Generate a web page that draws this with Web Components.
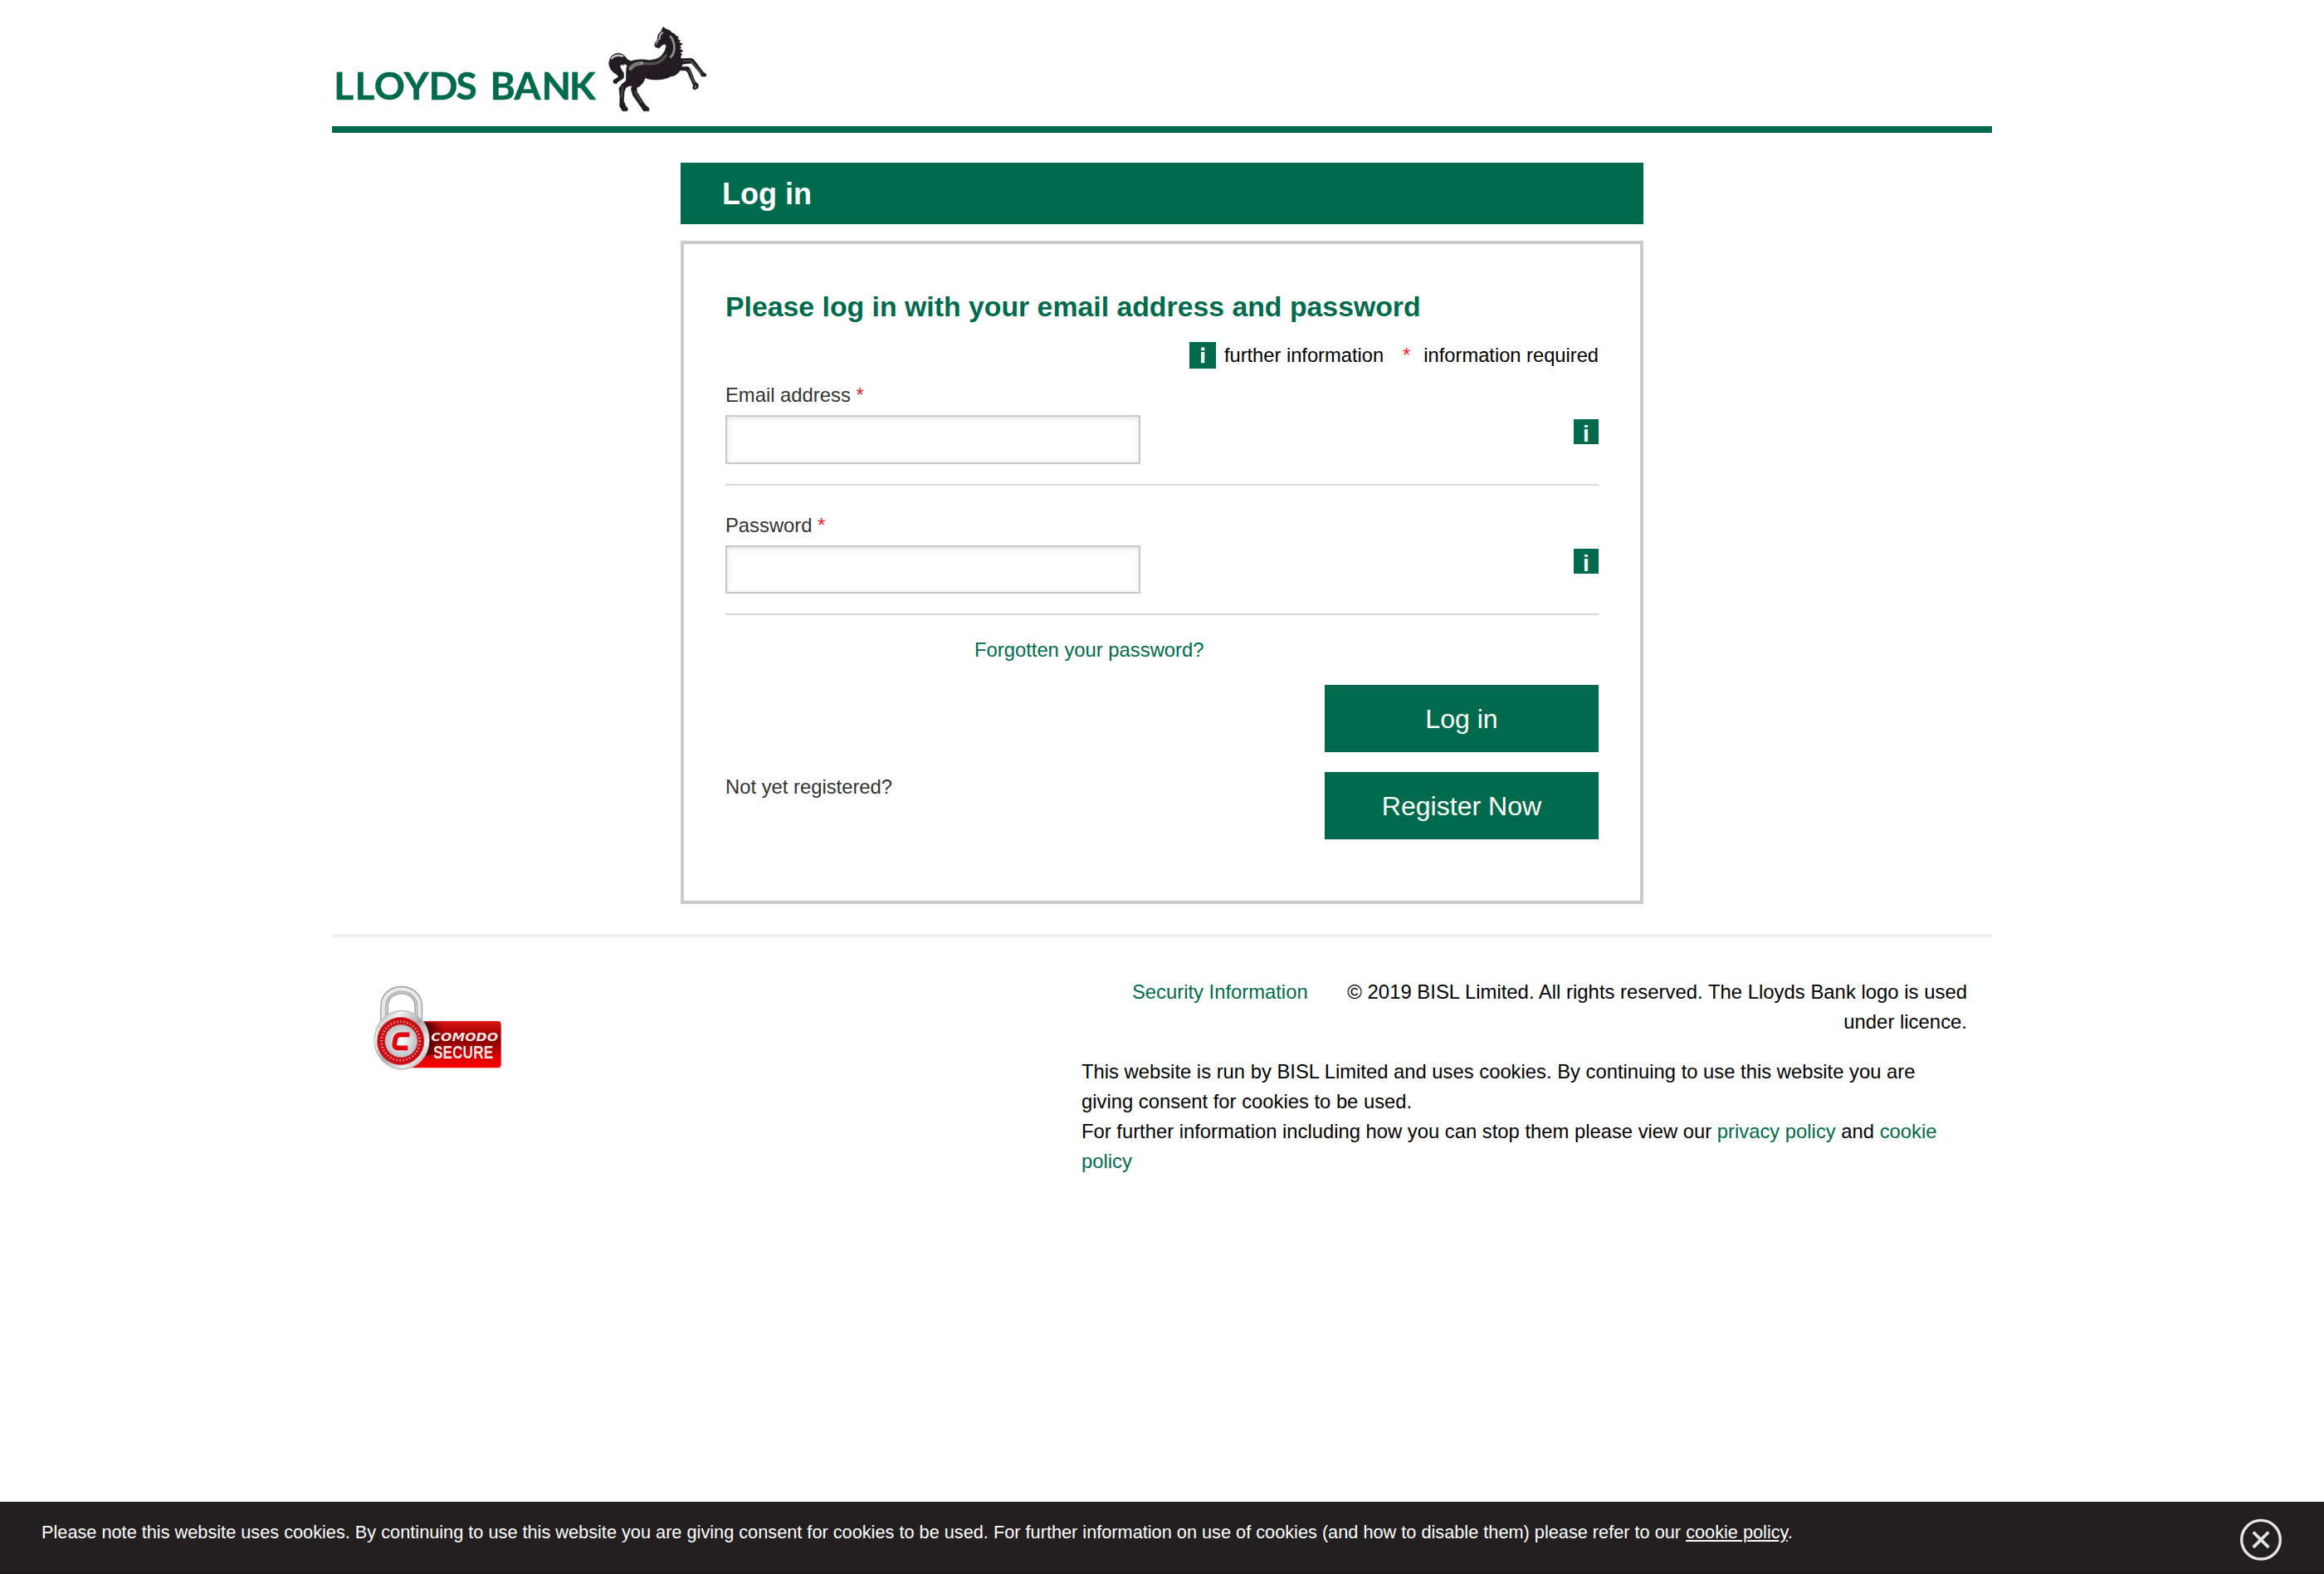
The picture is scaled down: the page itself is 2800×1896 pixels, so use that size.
<!DOCTYPE html>
<html lang="en">
<head>
<meta charset="utf-8">
<title>Log in</title>
<style>
html,body{margin:0;background:#fff}
body{font:23.8px/36px "Liberation Sans",Arial,sans-serif;color:#000;--green:#006a4d}
</style>
</head>
<body>
<login-page></login-page>
<script>
function define(name, html, setup) {
  const t = document.createElement('template');
  t.innerHTML = html;
  customElements.define(name, class extends HTMLElement {
    constructor() {
      super();
      this.attachShadow({ mode: 'open' }).appendChild(t.content.cloneNode(true));
    }
    connectedCallback() { if (setup) setup(this, this.shadowRoot); }
  });
}

define('bank-logo', `
<style>:host{display:block;width:459px;height:137px;background:#fefefe}svg{display:block}</style>
<svg width="459" height="137" viewBox="400 15 459 137">
  <defs><filter id="soft" x="-5%" y="-5%" width="110%" height="110%"><feGaussianBlur stdDeviation="2"/></filter>
  <filter id="softText" x="-5%" y="-10%" width="110%" height="120%"><feGaussianBlur stdDeviation=".5"/></filter></defs>
  <g font-family="Lato,sans-serif" font-weight="700" font-size="46" fill="#006a4d" stroke="#006a4d" stroke-width=".5" filter="url(#softText)">
    <text x="402.2 427.5 450.8 486.7 516.5 549.4" y="119.7">LLOYDS</text>
    <text x="590.5 619.4 652.5 686" y="119.7">BANK</text>
  </g>
  <g transform="translate(720 20) scale(.33333)" filter="url(#soft)">
    <path fill="#231f20" stroke="#231f20" stroke-width="2" d="M238 37L246 45Q262 48 268 58L280 64L282 70L292 73L289 82L299 86L294 93L307 99L297 106L302 113L296 117L309 124L299 130L305 138L299 143L302 152L338 151Q346 152 352 161L382 201L392 208L392 216L376 216L370 204L339 168L306 172L304 182L326 181Q334 184 338 198L352 234L364 245L363 258L352 264L344 260L346 248L326 203L320 195L298 194Q284 216 264 216Q246 227 214 228Q186 228 172 221Q164 248 141 257L142 272L171 318L186 331L185 341L166 341L158 328L128 285L121 262L125 250Q112 248 101 258L96 274L94 304L101 322L109 332L107 341L90 341L80 324L81 290L78 260Q84 245 103 232L104 197Q103 182 110 174L106 176Q98 168 90 176L88 172Q81 174 81 182Q86 192 94 204L94 222L82 230L72 236L68 243L57 239L57 230L76 218Q74 210 60 203Q42 190 41 168Q44 136 74 132Q94 134 102 148Q108 158 120 161Q150 152 188 158Q214 156 230 143Q247 124 248 106Q244 96 236 101L228 108L221 114L208 109L206 98L216 84L219 65L231 52Q232 44 238 37Z"/>
    <g fill="none" stroke-linecap="round">
      <path stroke="#fdfdfd" stroke-opacity=".75" stroke-width="7" d="M51 151Q66 135 90 143"/>
      <path stroke="#fff" stroke-opacity=".6" stroke-width="7" d="M234 58Q223 66 224 80"/>
      <path stroke="#fff" stroke-opacity=".45" stroke-width="6" d="M219 84L211 99"/>
      <path stroke="#fff" stroke-opacity=".5" stroke-width="8" d="M264 72Q279 92 277 116Q276 136 264 146"/>
      <path stroke="#fff" stroke-opacity=".4" stroke-width="14" d="M119 188Q132 169 158 169"/>
      <path stroke="#fff" stroke-opacity=".22" stroke-width="10" d="M160 168Q190 174 216 167Q236 158 247 140"/>
      <path stroke="#fff" stroke-opacity=".25" stroke-width="4" d="M308 160L337 160L374 202M331 192L349 240M91 252L87 290M134 270L158 310"/>
      <path stroke="#fff" stroke-opacity=".5" stroke-width="4" d="M354 250L354 257"/>
    </g>
  </g>
</svg>`);

define('page-header', `
<style>:host{display:block;padding-top:15px;border-bottom:8px solid var(--green)}</style><slot></slot>`);

define('page-title', `
<style>:host{display:block;box-sizing:border-box;height:74px;background:var(--green);color:#fff;padding:1px 50px 0;font:bold 36px/74px "Liberation Sans",sans-serif}</style><slot></slot>`);

define('form-card', `
<style>
:host{display:block;border:4px solid #ccc;padding:55px 50px 74px}
h2{margin:0 0 21px;font-size:33.8px;line-height:40px;color:var(--green)}
</style>
<h2><slot name="heading"></slot></h2><slot></slot>`);

define('info-badge', `
<style>:host{display:block;box-sizing:border-box;width:30px;height:30px;background:var(--green);color:#fff;font:bold 28px/35px "Liberation Sans",sans-serif;text-align:center}</style>i`);

define('form-legend', `
<style>
:host{display:flex;justify-content:flex-end;align-items:center;height:36px;margin-bottom:12px;font-size:23.7px}
svg{display:block;margin-right:10px}
b{font-weight:400;color:#ed1c24;margin:0 16px 0 23px}
</style>
<svg width="32" height="32"><defs><filter id="s"><feGaussianBlur stdDeviation=".7"/></filter></defs><path fill="#006a4d" d="M0 0h32v32H0z"/><path filter="url(#s)" fill="#eef6f3" d="M14.1 6.4h4.2v3.8h-4.2zM14.1 12h4.2v13.3h-4.2z"/></svg>
<span>further information</span><b>*</b><span>information required</span>`);

define('form-field', `
<style>
:host{display:block;padding-bottom:24px;border-bottom:2px solid #d9d9d9;margin-bottom:30px;color:#333}
:host([last]){margin-bottom:24px}
label{display:block;margin-bottom:6px}
b{font-weight:400;color:#ed1c24}
.row{display:flex;justify-content:space-between;align-items:flex-start}
input{display:block;box-sizing:border-box;width:500px;height:var(--h,59px);margin:0;padding:0 10px;border:2px solid #c8c8c8;border-radius:0;background:#fefefe;box-shadow:inset 0 2px 6px rgba(0,0,0,.1);outline:0}
info-badge{margin-top:var(--gap,5px)}
</style>
<label><slot></slot> <b>*</b></label>
<div class="row"><input><info-badge></info-badge></div>`,
(el, root) => { root.querySelector('input').type = el.getAttribute('type') || 'text'; });

define('action-button', `
<style>
:host{display:block;width:330px}
button{display:block;box-sizing:border-box;width:100%;height:81px;border:0;padding:1px 0 0;background:var(--green);color:#fff;font:32.1px/80px "Liberation Sans",sans-serif}
</style><button><slot></slot></button>`);

define('login-form', `
<style>
:host{display:block;width:1160px;margin:36px auto}
page-title{margin-bottom:20px}
.forgot{display:block;margin-left:300px;color:var(--green);text-decoration:none}
.actions{display:flex;justify-content:flex-end;margin:24px 0}
.register{display:flex;justify-content:space-between;color:#333}
.pw{--h:58px;--gap:4px}
</style>
<page-title>Log in</page-title>
<form-card>
  <span slot="heading">Please log in with your email address and password</span>
  <form-legend></form-legend>
  <form-field>Email address</form-field>
  <form-field class="pw" type="password" last>Password</form-field>
  <a class="forgot">Forgotten your password?</a>
  <div class="actions"><action-button>Log in</action-button></div>
  <div class="register"><span>Not yet registered?</span><action-button>Register Now</action-button></div>
</form-card>`);

define('secure-seal', `
<style>:host{display:block;width:155px;height:103px}svg{display:block;overflow:visible}</style>
<svg width="155" height="103" viewBox="60 48 465 309">
  <defs>
    <linearGradient id="r" x1="0" y1="0" x2="0" y2="1"><stop offset="0" stop-color="#e01818"/><stop offset=".12" stop-color="#c00808"/><stop offset=".45" stop-color="#8f0000"/><stop offset=".7" stop-color="#cc0000"/><stop offset="1" stop-color="#f00"/></linearGradient>
    <linearGradient id="d"><stop offset="0" stop-color="#200" stop-opacity=".9"/><stop offset="1" stop-color="#400" stop-opacity="0"/></linearGradient>
    <linearGradient id="m" x1="0" y1="0" x2="1" y2="1"><stop offset="0" stop-color="#999"/><stop offset=".25" stop-color="#f2f2f2"/><stop offset=".5" stop-color="#aaa"/><stop offset=".75" stop-color="#eee"/><stop offset="1" stop-color="#999"/></linearGradient>
    <radialGradient id="c"><stop offset="0" stop-color="#fff"/><stop offset="1" stop-color="#bcc0c2"/></radialGradient>
    <filter id="b" x="-5%" y="-5%" width="110%" height="110%"><feGaussianBlur stdDeviation="2"/></filter>
  </defs>
  <g filter="url(#b)">
    <rect x="180" y="177" width="341" height="169" rx="12" fill="url(#r)"/>
    <rect x="240" y="182" width="75" height="118" fill="url(#d)"/>
    <g fill="none">
      <path stroke="#999" stroke-width="29" d="M99 184V125C99 45 223 45 223 125V184"/>
      <path stroke="#e8e8e8" stroke-width="21" d="M99 184V125C99 45 223 45 223 125V184"/>
      <path stroke="#b0b0b0" stroke-width="5" d="M104 184V125C104 53 218 53 218 125V184"/>
    </g>
    <ellipse cx="162" cy="245" rx="101" ry="108" fill="#bbb"/>
    <ellipse cx="162" cy="245" rx="98" ry="104" fill="url(#m)"/>
    <ellipse cx="158" cy="249" rx="85" ry="86" fill="#c80f14"/>
    <ellipse cx="158" cy="249" rx="69" ry="70" fill="none" stroke="#f09a9a" stroke-width="8" stroke-dasharray="4 8"/>
    <circle cx="160" cy="249" r="59" fill="url(#c)"/>
    <path fill="none" stroke="#e3060d" stroke-width="17" stroke-linejoin="round" d="M190 226H158Q142 226 139 242L136 258Q134 274 148 274H184"/>
    <g fill="#f2e6e6" font-weight="700">
      <text transform="translate(268 249) scale(1.08 1)" font-family="DejaVu Sans,sans-serif" font-size="44" font-style="italic">COMODO</text>
      <text transform="translate(276 313) scale(.8 1)" font-family="Liberation Sans,sans-serif" font-size="65">SECURE</text>
    </g>
  </g>
</svg>`);

define('page-footer', `
<style>
:host{display:flex;justify-content:space-between;align-items:flex-start;border-top:4px solid #f0f0f0;padding:48px 30px 0 50px}
secure-seal{margin-top:10px}
.legal{width:1067px}
.top{display:flex;justify-content:space-between;padding-left:61px;margin-bottom:24px}
.copy{text-align:right;font-size:23.9px}
p{margin:0}
a{color:var(--green)}
</style>
<secure-seal></secure-seal>
<div class="legal">
  <div class="top"><a>Security Information</a><span class="copy">© 2019 BISL Limited. All rights reserved. The Lloyds Bank logo is used<br>under licence.</span></div>
  <p>This website is run by BISL Limited and uses cookies. By continuing to use this website you are<br>giving consent for cookies to be used.<br>For further information including how you can stop them please view our <a>privacy policy</a> and <a>cookie<br>policy</a></p>
</div>`);

define('cookie-bar', `
<style>
:host{display:flex;justify-content:space-between;align-items:flex-start;box-sizing:border-box;height:87px;padding:19px 48px 0 50px;background:#231f20;color:#fff;font-size:21.73px;border-bottom:2px solid #1d191a}
u{text-decoration:underline}
svg{display:block}
</style>
<span>Please note this website uses cookies. By continuing to use this website you are giving consent for cookies to be used. For further information on use of cookies (and how to disable them) please refer to our <u>cookie policy</u>.</span>
<svg width="56" height="54" viewBox="0 0 56 54" fill="none" stroke="#e4e4e4" stroke-width="3.4"><circle cx="28" cy="26.7" r="23.3"/><path stroke-width="3.8" d="M18.8 17.5l18.4 18.4m0-18.4L18.8 35.9"/></svg>`);

define('login-page', `
<style>
:host{display:flex;flex-direction:column;min-height:100vh}
main{width:2000px;margin:0 auto}
cookie-bar{margin-top:auto}
</style>
<main>
  <page-header><bank-logo></bank-logo></page-header>
  <login-form></login-form>
  <page-footer></page-footer>
</main>
<cookie-bar></cookie-bar>`);
</script>
</body>
</html>
